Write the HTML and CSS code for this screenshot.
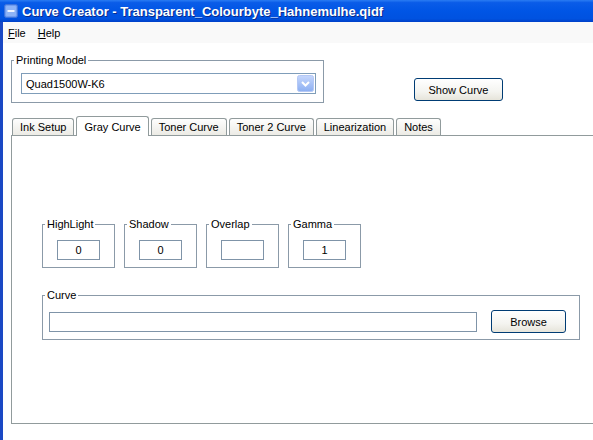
FILE: index.html
```html
<!DOCTYPE html>
<html lang="en">
<head>
  <meta charset="UTF-8" />
  <title>Curve Creator</title>
  <link rel="stylesheet" href="styles.css">
</head>
<body>
  <div class="titlebar">
    <svg class="app-icon" width="14" height="14" viewBox="0 0 14 14">
      <rect x="0.5" y="0.5" width="13" height="13" rx="2" fill="#6f9cf0" stroke="#3f74dc"/>
      <rect x="2" y="2" width="10" height="10" rx="1" fill="#8db3f7"/>
      <rect x="3.5" y="6" width="7" height="2" fill="#eef4ff"/>
    </svg>
    <span class="title">Curve Creator - Transparent_Colourbyte_Hahnemulhe.qidf</span>
  </div>

  <div class="frame">
    <div class="menubar">
      <span class="menu"><u>F</u>ile</span>
      <span class="menu"><u>H</u>elp</span>
    </div>

    <div class="toprow">
      <fieldset class="group model-group">
        <legend>Printing Model</legend>
        <div class="combo">
          <span class="combo-text">Quad1500W-K6</span>
          <svg class="combo-btn" width="17" height="17" viewBox="0 0 17 17">
            <defs>
              <linearGradient id="cb" x1="0" y1="0" x2="0" y2="1">
                <stop offset="0" stop-color="#c6d7fc"/>
                <stop offset="1" stop-color="#8caff2"/>
              </linearGradient>
            </defs>
            <rect x="0.5" y="0.5" width="16" height="16" rx="2" fill="url(#cb)" stroke="#b4c8f5"/>
            <path d="M5 7 L8.5 10.5 L12 7" fill="none" stroke="#fff" stroke-width="2"/>
          </svg>
        </div>
      </fieldset>
      <button class="btn show-btn">Show Curve</button>
    </div>

    <div class="tabs">
      <div class="tab">Ink Setup</div>
      <div class="tab selected">Gray Curve</div>
      <div class="tab">Toner Curve</div>
      <div class="tab">Toner 2 Curve</div>
      <div class="tab">Linearization</div>
      <div class="tab">Notes</div>
    </div>

    <div class="panel">
      <div class="params">
        <fieldset class="group param">
          <legend>HighLight</legend>
          <div class="field small">0</div>
        </fieldset>
        <fieldset class="group param">
          <legend>Shadow</legend>
          <div class="field small">0</div>
        </fieldset>
        <fieldset class="group param">
          <legend>Overlap</legend>
          <div class="field small"></div>
        </fieldset>
        <fieldset class="group param">
          <legend>Gamma</legend>
          <div class="field small">1</div>
        </fieldset>
      </div>

      <fieldset class="group curve-group">
        <legend>Curve</legend>
        <div class="field wide"></div>
        <button class="btn browse-btn">Browse</button>
      </fieldset>
    </div>
  </div>
</body>
</html>
```

FILE: styles.css
```css
body {
  margin: 0;
  font-family: 'Liberation Sans', Arial, sans-serif;
  font-size: 11px;
  color: #000;
  background: #fff;
  overflow: hidden;
  width: 593px;
  height: 440px;
}
.titlebar {
  height: 22px;
  display: flex;
  align-items: center;
  background: linear-gradient(#2a7cf3 0%, #0a5ce8 12%, #0055e5 50%, #0052e0 85%, #0040c8 100%);
  color: white;
}
.app-icon {
  margin-left: 4px;
  margin-right: 4px;
}
.title {
  font-weight: bold;
  font-size: 13px;
  text-shadow: 1px 1px 0 #0a2a8a;
  white-space: nowrap;
}
.frame {
  border-left: 3px solid #1a48c4;
  height: 418px;
}
.menubar {
  height: 21px;
  display: flex;
  align-items: center;
  background: #f9f9f9;
  font-size: 11px;
}
.menu {
  margin-left: 5px;
  margin-right: 7px;
}
.toprow {
  display: flex;
  align-items: flex-start;
  margin-top: 11px;
  padding-left: 8px;
}
.group {
  margin: 0;
  border: 1px solid #8b9aa8;
  box-sizing: border-box;
  min-width: 0;
}
.group legend {
  padding: 0 2px;
  margin-left: 2px;
  line-height: 13px;
  font-size: 11px;
}
.model-group {
  width: 313px;
  padding: 6px 7px 8px 0;
}
.combo {
  height: 21px;
  margin-left: 9px;
  box-sizing: border-box;
  border: 1px solid #7f9db9;
  display: flex;
  align-items: center;
  justify-content: space-between;
  padding-left: 4px;
  padding-right: 1px;
  font-size: 11px;
}
.btn {
  font-family: 'Liberation Sans', Arial, sans-serif;
  font-size: 11px;
  color: #000;
  border: 1px solid #003c74;
  border-radius: 3px;
  background: linear-gradient(#ffffff 0%, #f4f4f0 60%, #e6e4da 100%);
  padding: 0;
  box-sizing: border-box;
}
.show-btn {
  width: 89px;
  height: 23px;
  margin-left: 90px;
  margin-top: 24px;
}
.tabs {
  display: flex;
  align-items: flex-end;
  margin-top: 13px;
  padding-left: 9px;
  height: 19px;
}
.tab {
  height: 17px;
  box-sizing: border-box;
  padding: 0 7px;
  margin-right: 2px;
  border: 1px solid #919b9c;
  border-bottom: none;
  border-radius: 3px 3px 0 0;
  background: linear-gradient(#fefefe, #ecebe5);
  display: flex;
  align-items: center;
  white-space: nowrap;
}
.tab.selected {
  height: 20px;
  margin-bottom: -1px;
  background: #fff;
  position: relative;
  z-index: 1;
}
.panel {
  margin-left: 8px;
  width: 600px;
  height: 289px;
  box-sizing: border-box;
  border: 1px solid #919b9c;
  padding: 82px 0 0 30px;
}
.params {
  display: flex;
  gap: 9px;
}
.param {
  width: 73px;
  padding: 9px 0 7px;
  display: flex;
  justify-content: center;
}
.field {
  border: 1px solid #7f94a8;
  box-sizing: border-box;
  height: 20px;
  display: flex;
  align-items: center;
  justify-content: center;
  background: #fff;
}
.field.small {
  width: 43px;
  margin: 0 auto;
}
.curve-group {
  width: 538px;
  margin-top: 21px;
  padding: 8px 0 6px 0;
  display: flex;
  align-items: center;
}
.field.wide {
  width: 428px;
  margin-left: 6px;
}
.browse-btn {
  width: 75px;
  height: 23px;
  margin-left: 14px;
}
```
